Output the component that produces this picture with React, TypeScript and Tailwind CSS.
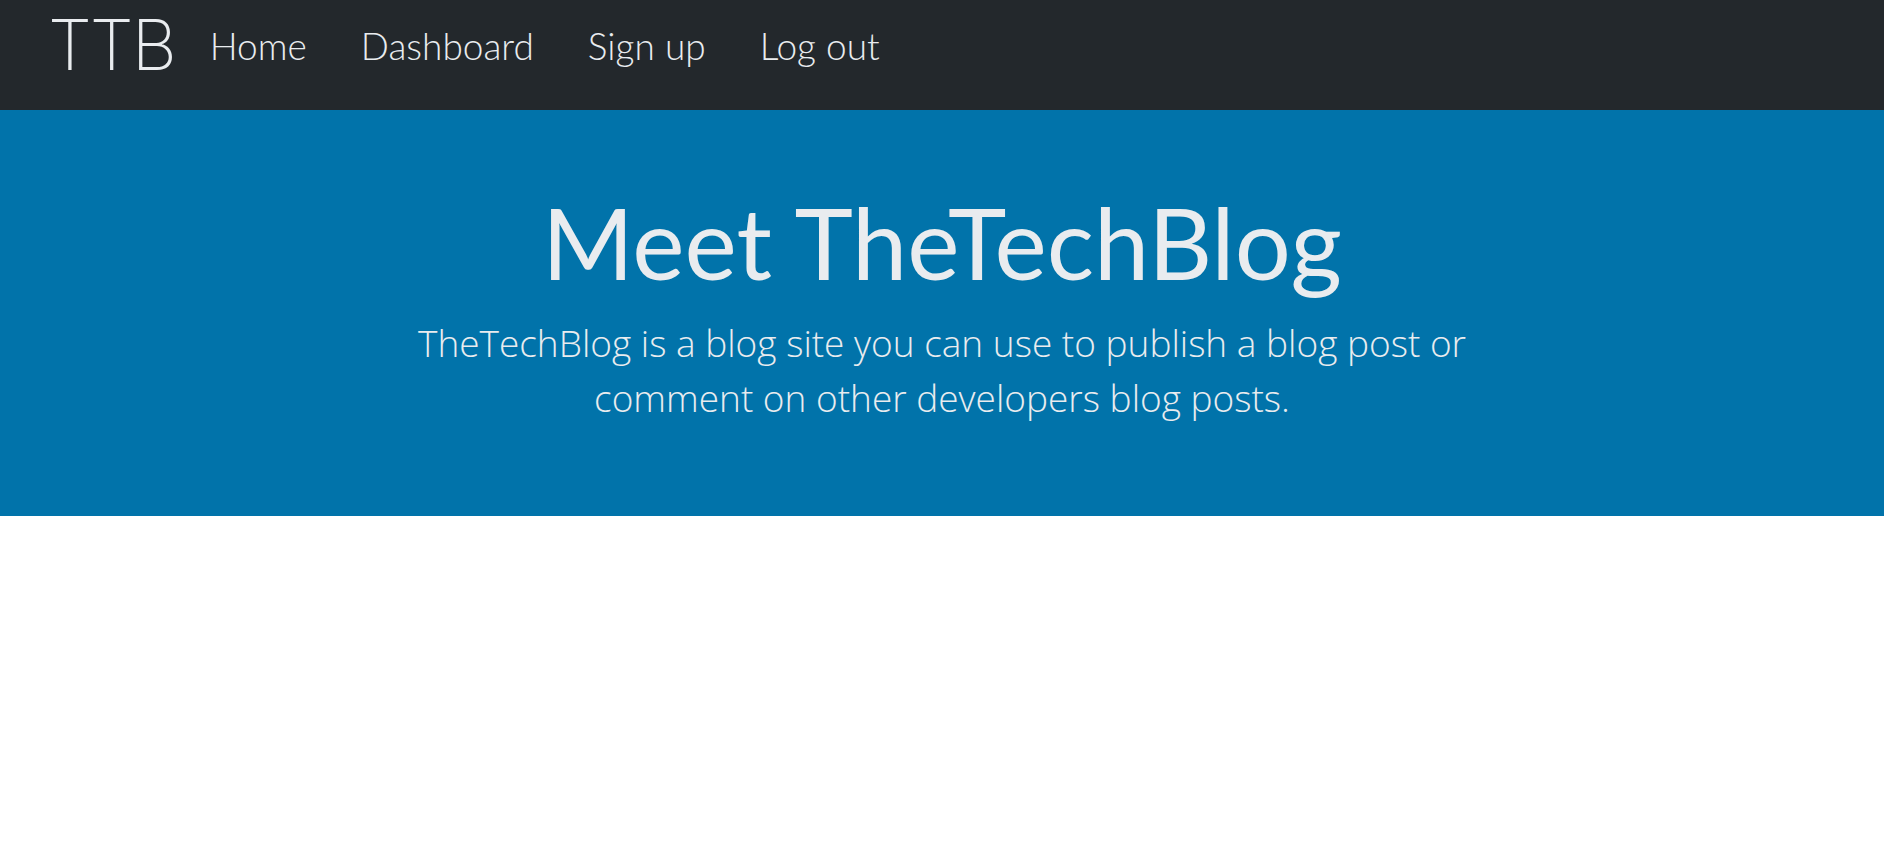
import React from "react";

export default function App() {
  const links = ["Home", "Dashboard", "Sign up", "Log out"];
  return (
    <div className="min-h-screen bg-white">
      <nav className="flex h-[110px] items-start bg-[#23282c] pl-[48px] pt-[10px] text-[#e9ecef]">
        <a className="font-['Inter',sans-serif] text-[70px] font-extralight leading-[70px] tracking-[-2px]">TTB</a>
        <ul className="ml-[35px] mt-[14px] flex gap-[54px]">
          {links.map((l) => (
            <li key={l} className="font-['Lato',sans-serif] text-[37px] font-light leading-[44px]">
              {l}
            </li>
          ))}
        </ul>
      </nav>
      <header className="flex h-[406px] flex-col items-center bg-[#0173aa] pt-[72px] text-center text-[#e9ecef]">
        <h1 className="font-['Lato',sans-serif] text-[99px] font-normal leading-[120px]">Meet TheTechBlog</h1>
        <p className="mt-[13px] font-['Open_Sans',sans-serif] text-[37px] font-light leading-[55px]">
          TheTechBlog is a blog site you can use to publish a blog post or
          <br />
          comment on other developers blog posts.
        </p>
      </header>
    </div>
  );
}
